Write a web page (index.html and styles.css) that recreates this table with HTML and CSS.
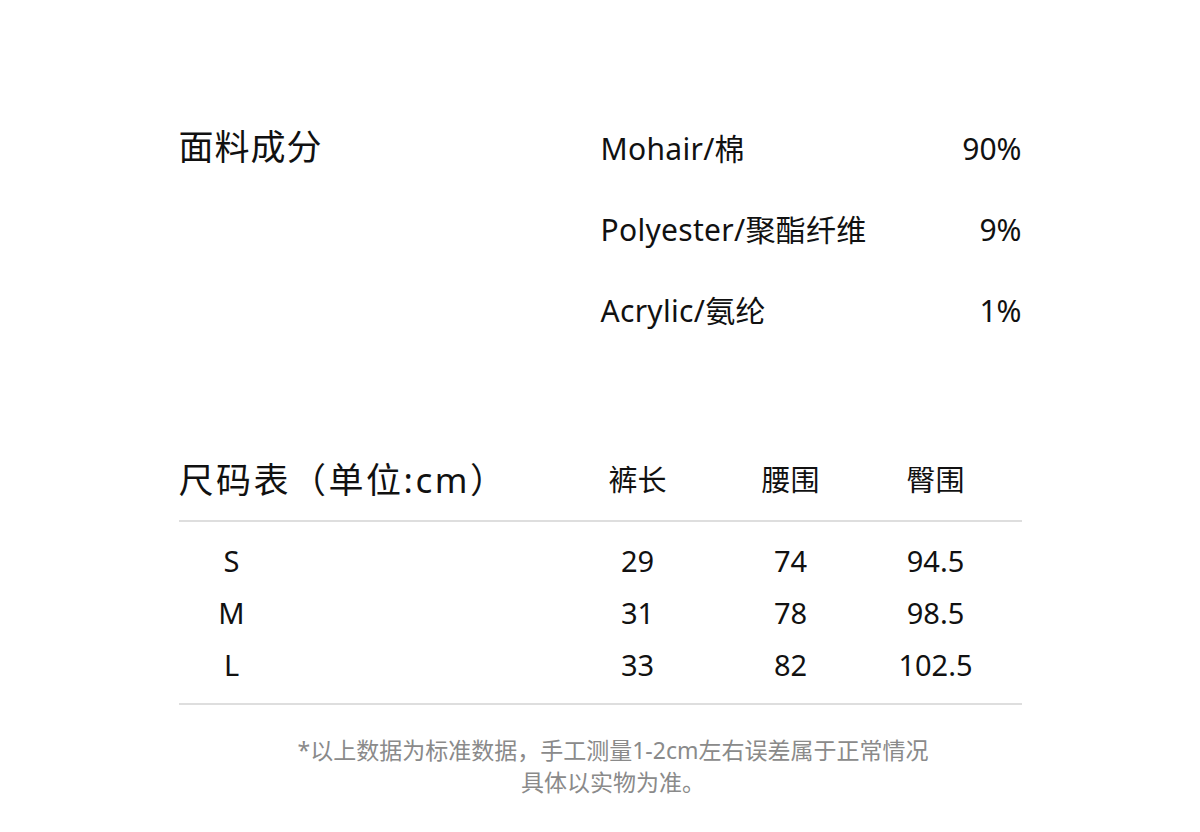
FILE: index.html
```html
<!DOCTYPE html>
<html lang="zh">
<head>
<meta charset="utf-8">
<link rel="stylesheet" href="styles.css">
</head>
<body>
<main class="page">
  <section class="fabric">
    <h2 class="title">面料成分</h2>
    <ul class="materials">
      <li class="mat"><span>Mohair/棉</span><span>90%</span></li>
      <li class="mat"><span>Polyester/聚酯纤维</span><span>9%</span></li>
      <li class="mat"><span>Acrylic/氨纶</span><span>1%</span></li>
    </ul>
  </section>

  <section class="sizes">
    <div class="row head">
      <h2 class="title size-title span2">尺码表（单位:cm）</h2>
      <span class="c3">裤长</span>
      <span class="c4">腰围</span>
      <span class="c5">臀围</span>
    </div>
    <div class="body">
      <div class="row"><span class="c1">S</span><span class="c3">29</span><span class="c4">74</span><span class="c5">94.5</span></div>
      <div class="row"><span class="c1">M</span><span class="c3">31</span><span class="c4">78</span><span class="c5">98.5</span></div>
      <div class="row"><span class="c1">L</span><span class="c3">33</span><span class="c4">82</span><span class="c5">102.5</span></div>
    </div>
  </section>

  <p class="note">*以上数据为标准数据，手工测量1-2cm左右误差属于正常情况<br>具体以实物为准。</p>
</main>
</body>
</html>
```

FILE: styles.css
```css
* { box-sizing: border-box; }
html, body { margin: 0; padding: 0; background: #fff; }
body {
  font-family: "Noto Sans", "Noto Sans CJK SC", sans-serif;
  color: #111;
}
.page {
  width: 843px;
  margin: 0 auto;
  padding-top: 127px;
}
.title {
  margin: 0;
  font-weight: 400;
  font-size: 35px;
  line-height: 40px;
  letter-spacing: 1px;
}
.size-title { letter-spacing: 2.5px; }
.fabric {
  display: grid;
  grid-template-columns: 422px 1fr;
}
.materials {
  list-style: none;
  margin: 2px 0 0;
  padding: 0;
  display: flex;
  flex-direction: column;
  gap: 41px;
}
.mat {
  display: flex;
  justify-content: space-between;
  font-size: 30px;
  line-height: 40px;
}
.mat span:first-child { letter-spacing: 0.3px; }
.sizes {
  margin-top: 129px;
}
.row {
  display: grid;
  grid-template-columns: 106px 276px 154px 152px 138px 17px;
  align-items: center;
  text-align: center;
}
.row.head {
  padding-bottom: 20px;
  border-bottom: 2px solid #dedede;
  font-size: 29px;
  line-height: 40px;
}
.row.head .title { text-align: left; }
.span2 { grid-column: 1 / 3; white-space: nowrap; }
.c1 { grid-column: 1; }
.c3 { grid-column: 3; }
.c4 { grid-column: 4; }
.c5 { grid-column: 5; }
.body {
  padding: 13px 0 12px;
  border-bottom: 2px solid #dedede;
}
.body .row {
  font-size: 29px;
  line-height: 52px;
}
.note {
  margin: 29px 0 0;
  padding-left: 26px;
  text-align: center;
  color: #8a8a8a;
  font-size: 23px;
  line-height: 32px;
}
```
